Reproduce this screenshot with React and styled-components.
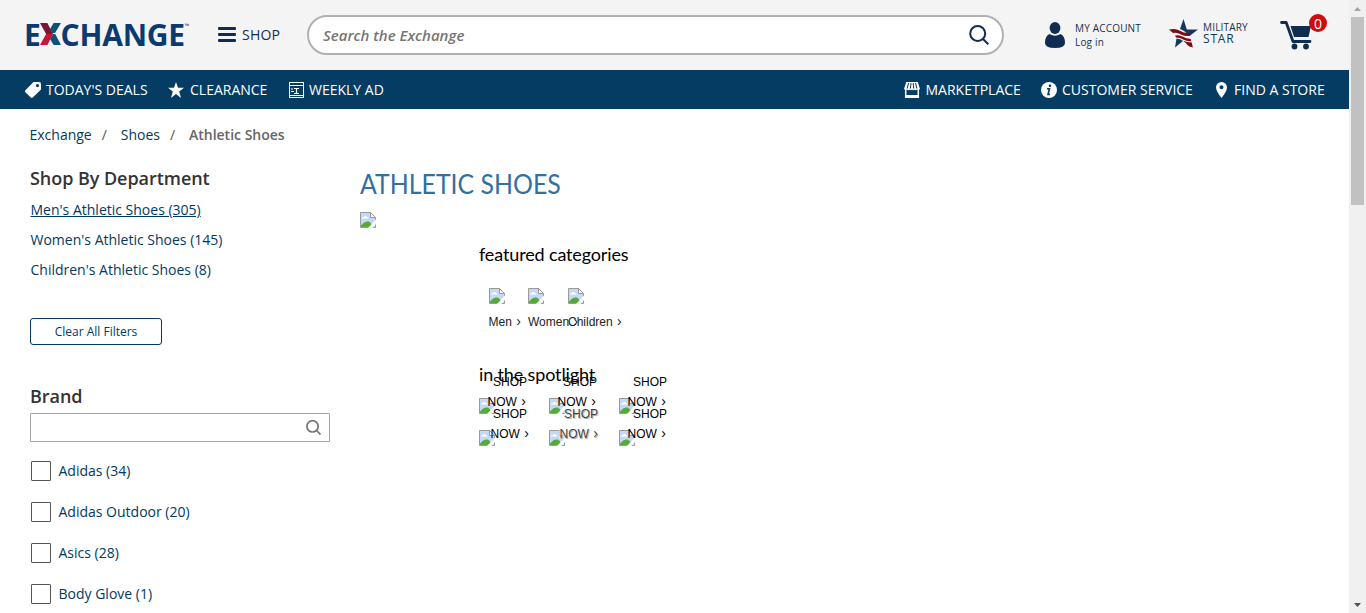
import React from "react";
import styled, { createGlobalStyle } from "styled-components";

const Global = createGlobalStyle`
  * { box-sizing: border-box; }
  html, body { margin: 0; padding: 0; overflow: hidden; }
  body { background: #fff; font-family: "Open Sans", "Liberation Sans", sans-serif; color: #003a63; }
  svg { display: block; flex: none; }
`;

const Screen = styled.div`
  display: flex;
  width: 1366px;
  height: 613px;
  overflow: hidden;
`;
const Page = styled.div`
  width: 1349px;
  height: 613px;
  overflow: hidden;
`;

/* Header */
const Header = styled.header`
  display: flex;
  height: 70px;
  padding-left: 24px;
  align-items: center;
  background: #f4f4f4;
`;
const Logo = styled.div`
  display: flex;
  align-items: center;
  width: 194px;
  height: 31px;
  margin-bottom: 2px;
  font: 700 30px/31px "Open Sans", sans-serif;
  color: #0b3a70;
`;
const LogoText = styled.span`
  letter-spacing: ${(p) => p.$ls || "0"};
`;
const Trademark = styled.span`
  font-size: 6px;
  line-height: 8px;
  font-weight: 400;
  align-self: flex-start;
  margin-top: 3px;
`;
const ShopMenu = styled.div`
  display: flex;
  align-items: center;
  gap: 6px;
  width: 89px;
  margin-bottom: 1px;
  font-size: 14px;
  letter-spacing: 0.2px;
  color: #0e2d52;
`;
const SearchBox = styled.div`
  display: flex;
  align-items: center;
  justify-content: space-between;
  width: 697px;
  height: 40px;
  padding: 0 13px 0 14px;
  border: 2px solid #b1b1b1;
  border-radius: 20px;
  background: #fff;
  font-size: 15px;
  font-style: italic;
  font-weight: 600;
  color: #757575;
`;
const Account = styled.div`
  display: flex;
  align-items: center;
  gap: 10px;
  width: 124px;
  margin-left: 41px;
`;
const Stack = styled.div`
  display: flex;
  flex-direction: column;
  white-space: nowrap;
`;
const Small = styled.span`
  font-size: 10px;
  line-height: ${(p) => p.$lh || "14px"};
  letter-spacing: 0.18px;
  color: #14304f;
`;
const StarWord = styled.span`
  font-size: 12px;
  line-height: 12px;
  letter-spacing: 0.8px;
  color: #0e3a5c;
`;
const Military = styled.div`
  display: flex;
  align-items: center;
  gap: 5px;
  width: 111px;
  height: 30px;
  margin-bottom: 3px;
`;
const Cart = styled.div`
  position: relative;
  width: 34px;
  height: 29px;
`;
const Badge = styled.span`
  position: absolute;
  left: 29px;
  top: -7px;
  width: 18px;
  height: 18px;
  border-radius: 50%;
  background: #d00b0f;
  color: #fff;
  font-size: 14px;
  line-height: 19px;
  text-align: center;
`;

/* Navigation bar */
const Nav = styled.nav`
  display: flex;
  align-items: center;
  height: 39px;
  padding-left: 25px;
  background: #043c64;
  color: #fff;
  font-size: 14px;
  white-space: nowrap;
`;
const NavItem = styled.div`
  display: flex;
  align-items: center;
  gap: ${(p) => p.$gap}px;
  width: ${(p) => p.$w}px;
`;

/* Body */
const Crumbs = styled.div`
  display: flex;
  align-items: center;
  height: 51px;
  padding-left: 29.5px;
  font-size: 14px;
  color: #003a63;
`;
const Slash = styled.span`
  width: ${(p) => p.$w}px;
  padding-left: 10px;
  color: #555;
`;
const Current = styled.span`
  font-weight: 600;
  color: #666;
`;
const Body = styled.main`
  display: flex;
`;
const Side = styled.aside`
  width: 330px;
  padding: 5px 0 0 30px;
`;
const SideTitle = styled.h2`
  margin: 0;
  font-size: 18px;
  line-height: 26px;
  font-weight: 600;
  color: #333;
  letter-spacing: -0.05px;
`;
const Departments = styled.div`
  display: flex;
  flex-direction: column;
  padding: 4px 0 0 0.5px;
`;
const Department = styled.a`
  font-size: 14px;
  line-height: 30px;
  color: #003a63;
  text-decoration: ${(p) => (p.$active ? "underline" : "none")};
`;
const ClearButton = styled.button`
  display: block;
  width: 132px;
  height: 27px;
  margin: 33px 0 38px;
  padding: 0;
  border: 1px solid #003a63;
  border-radius: 3px;
  background: #fff;
  font: 400 12px "Open Sans", sans-serif;
  color: #003a63;
`;
const BrandSearch = styled.div`
  display: flex;
  align-items: center;
  justify-content: flex-end;
  width: 300px;
  height: 29px;
  margin: 4px 0 8px;
  padding-right: 8px;
  border: 1px solid #a5a5a5;
  border-radius: 1px;
`;
const BrandRow = styled.label`
  display: flex;
  align-items: center;
  gap: 8px;
  height: 41px;
  padding-left: 0.5px;
  font-size: 14px;
`;
const Box = styled.span`
  width: 20px;
  height: 20px;
  border: 1px solid #555;
  border-radius: 1px;
`;

const Main = styled.section`
  width: 500px;
  padding: 4px 0 0 30px;
`;
const Title = styled.h1`
  margin: 0;
  font: 400 27px/40px Lato, sans-serif;
  color: #31709f;
  white-space: nowrap;
  transform: scaleX(0.921);
  transform-origin: left;
`;
const Banner = styled.div`
  height: 38px;
  padding-top: 8px;
`;
const Inner = styled.div`
  padding-left: 119px;
`;
const Subhead = styled.h3`
  margin: 0;
  height: 24px;
  font: 400 18px/24px Lato, sans-serif;
  letter-spacing: -0.14px;
  color: #000;
  white-space: nowrap;
`;
const Categories = styled.div`
  display: flex;
  height: 96px;
  padding: 22px 0 0 9.5px;
`;
const Category = styled.div`
  display: flex;
  flex-direction: column;
  gap: 10px;
  width: ${(p) => p.$w}px;
  font: 400 12px/16px "Liberation Sans", Arial, sans-serif;
  color: #222;
  white-space: pre;
`;
const Chevron = styled.span`
  margin-left: 1px;
  font: 400 14px/14px "Liberation Sans", Arial, sans-serif;
`;
const Spotlight = styled.div`
  display: grid;
  grid-template-columns: 70px 70px 70px;
  grid-auto-rows: 32px;
  padding-top: 12px;
`;
const Tile = styled.div`
  position: relative;
`;
const TileLink = styled.a`
  position: absolute;
  left: 0;
  top: -26px;
  display: flex;
  flex-direction: column;
  font: 400 12px/20px "Liberation Sans", Arial, sans-serif;
  color: ${(p) => (p.$shadow ? "#444" : "#000")};
  text-shadow: ${(p) => (p.$shadow ? "-1px 0 0 #fff, 1px 1px 1px #999" : "none")};
  white-space: pre;
`;
const TileLine = styled.span`
  padding-left: ${(p) => p.$x}px;
`;

/* Scrollbar */
const Scrollbar = styled.div`
  display: flex;
  flex-direction: column;
  align-items: center;
  width: 17px;
  height: 613px;
  background: #f0f0f0;
`;
const ArrowCell = styled.div`
  display: flex;
  align-items: center;
  justify-content: center;
  height: 17px;
`;
const Thumb = styled.div`
  width: 13px;
  height: 188px;
  margin-bottom: 391px;
  background: #c1c1c1;
`;

const Broken = () => (
  <svg width="16" height="16" viewBox="0 0 16 16">
    <path d="M.5.5h10l5 5v10H.5z" fill="#c5d8f8" stroke="#9a9a9a" />
    <path d="M10.5.5v5h5z" fill="#fff" stroke="#9a9a9a" />
    <path d="M2 6.5c0-1 1-1.5 1.7-1C4 3.5 6.5 3.5 7 5.2c1.2-.2 1.5.5 1.5 1.3z" fill="#fff" />
    <path d="M1 15v-1.5C3.5 11 5 9.500 7.5 9.500S11 11 13 15z" fill="#56aa38" />
    <path d="M7.500 16.500 16.500 7v4.500L12 16.500z" fill="#fff" />
  </svg>
);

const LogoX = () => (
  <svg width="21" height="22" viewBox="0 0 20 21" preserveAspectRatio="none">
    <path d="M0 0h7l5.500 10.500H5.800z" fill="#7b1533" />
    <path d="M5.800 10.500h6.700L7 21H0z" fill="#c41636" />
    <path d="M13 0h7l-5.700 9.500h-2.500L9.600 5.800z" fill="#0d5278" />
    <path d="M12.500 10.500h2L20 21h-7l-3.300-5.600z" fill="#0d5278" />
  </svg>
);

const Search = ({ size, color, sw }) => (
  <svg width={size} height={size} viewBox="0 0 20 20" fill="none" stroke={color} strokeWidth={sw}>
    <circle cx="8.700" cy="8.500" r="7.500" />
    <path d="M14 14l5.300 5.300" />
  </svg>
);

const brands = ["Adidas (34)", "Adidas Outdoor (20)", "Asics (28)", "Body Glove (1)"];
const categories = [
  ["Men", 39.5],
  ["Women", 40],
  ["Children", 60],
];
const tiles = [
  [14, 8.5],
  [14, 8.5],
  [14, 8.5],
  [14, 11.5],
  [15, 10.5, true],
  [14, 8.5],
];

export default function App() {
  return (
    <Screen>
      <Global />
      <Page>
        <Header>
          <Logo>
            <LogoText $ls="-1.2px">E</LogoText>
            <LogoX />
            <LogoText $ls="-0.25px">CHANGE</LogoText>
            <Trademark>™</Trademark>
          </Logo>
          <ShopMenu>
            <svg width="18" height="15" viewBox="0 0 18 15" fill="#0e2d52">
              <rect width="18" height="3" rx="1" />
              <rect y="6" width="18" height="3" rx="1" />
              <rect y="12" width="18" height="3" rx="1" />
            </svg>
            SHOP
          </ShopMenu>
          <SearchBox>
            Search the Exchange
            <Search size={20} color="#0e2d52" sw={2} />
          </SearchBox>
          <Account>
            <svg width="20" height="26" viewBox="0 0 20 26" fill="#102d51">
              <ellipse cx="10" cy="6" rx="5.4" ry="6" />
              <path d="M4.500 12Q10 15.500 15.500 12 20 14 20 21q0 5-10 5T0 21q0-7 4.500-9z" />
            </svg>
            <Stack>
              <Small>MY ACCOUNT</Small>
              <Small>Log in</Small>
            </Stack>
          </Account>
          <Military>
            <svg width="29" height="29" viewBox="0 0 29 29">
              <path d="M14.500 0l3.300 10.500H29L20.500 17q-4-5-9.500-7z" fill="#153862" />
              <path d="M7.500 19.500q4 0 6.500 2.500l-8 6.500z" fill="#153862" />
              <path d="M0 10.500q7-1.200 11 1.300t8.500 2.200l1.500 3q-5.500.5-9.500-1.800T4 14z" fill="#7f0a16" />
              <path d="M6 16.500q4.500-1 8 1.200t7.500 2l.8 2.600q-5 .2-8-1.800T7 18.500z" fill="#7f0a16" />
              <path d="M14 21.500q3.500 2 8.800 2l1 5q-4-.8-5.300-2.500T14 21.500z" fill="#7f0a16" />
            </svg>
            <Stack>
              <Small $lh="11px">MILITARY</Small>
              <StarWord>STAR</StarWord>
            </Stack>
          </Military>
          <Cart>
            <svg width="34" height="29" viewBox="0 0 34 29">
              <path d="M1.500 1.500h4.700L13 20.500h17" fill="none" stroke="#102d51" strokeWidth="2.800" strokeLinecap="round" strokeLinejoin="round" />
              <path d="M10.500 5H31l-2.500 11H14z" fill="#102d51" />
              <circle cx="14.500" cy="25.500" r="2.900" fill="#102d51" />
              <circle cx="26" cy="25.500" r="2.900" fill="#102d51" />
            </svg>
            <Badge>0</Badge>
          </Cart>
        </Header>
        <Nav>
          <NavItem $w={143} $gap={5}>
            <svg width="16" height="16" viewBox="0 0 16 16">
              <path d="M8.500 0H14q2 0 2 2v5.500L7.800 15.500q-1 .8-2 0L.4 10.200q-.8-1 0-2zM12.500 2a1.600 1.600 0 100 3.200 1.600 1.600 0 000-3.200z" fill="#fff" fillRule="evenodd" />
            </svg>
            TODAY'S DEALS
          </NavItem>
          <NavItem $w={121} $gap={6}>
            <svg width="16" height="16" viewBox="0 0 16 16">
              <path d="M8 0l2 5.700h6l-4.800 3.700L13 16l-5-4-5 4 1.800-6.600L0 5.700h6z" fill="#fff" />
            </svg>
            CLEARANCE
          </NavItem>
          <NavItem $w={615} $gap={5}>
            <svg width="15" height="16" viewBox="0 0 15 16" fill="none" stroke="#fff">
              <rect x=".5" y=".5" width="14" height="15" />
              <path d="M1 3.500h13M5 6.500h5M7.500 7v4M2 7h2M2 9.500h3M5 11.500h5M1 13.500h13" strokeWidth="1.200" />
            </svg>
            WEEKLY AD
          </NavItem>
          <NavItem $w={137} $gap={5.5}>
            <svg width="16" height="16" viewBox="0 0 16 16">
              <path d="M2.200 0h11.600L16 7q-1.300 2-3 .5-1.300 1.300-2.500 0-1.200 1.300-2.500 0-1.200 1.300-2.500 0-1.200 1.300-2.500 0Q1.300 9 0 7z" fill="#fff" />
              <path d="M4.500 1L3.200 6.500M7 1l-.6 5.500M9.200 1l.5 5.500M11.600 1l1.200 5.500" stroke="#043c64" />
              <path d="M1.700 8v7.200h12.600V8M1.700 13.800h12.600" fill="none" stroke="#fff" strokeWidth="1.500" />
            </svg>
            MARKETPLACE
          </NavItem>
          <NavItem $w={175} $gap={5}>
            <svg width="16" height="16" viewBox="0 0 16 16">
              <circle cx="8" cy="8" r="8" fill="#fff" />
              <circle cx="9" cy="3.800" r="1.300" fill="#043c64" />
              <path d="M6 6.800h2.500L7 12.500h2" fill="none" stroke="#043c64" strokeWidth="1.600" />
            </svg>
            CUSTOMER SERVICE
          </NavItem>
          <NavItem $w={120} $gap={7}>
            <svg width="11" height="16" viewBox="0 0 11 16">
              <path d="M5.500 0a5.500 5.500 0 015.500 5.500Q11 9 5.500 16 0 9 0 5.500A5.500 5.500 0 015.500 0zm0 3.300a2 2 0 100 4 2 2 0 000-4z" fill="#fff" fillRule="evenodd" />
            </svg>
            FIND A STORE
          </NavItem>
        </Nav>
        <Crumbs>
          Exchange<Slash $w={29}>/</Slash>Shoes<Slash $w={29}>/</Slash>
          <Current>Athletic Shoes</Current>
        </Crumbs>
        <Body>
          <Side>
            <SideTitle>Shop By Department</SideTitle>
            <Departments>
              <Department $active>Men's Athletic Shoes (305)</Department>
              <Department>Women's Athletic Shoes (145)</Department>
              <Department>Children's Athletic Shoes (8)</Department>
            </Departments>
            <ClearButton>Clear All Filters</ClearButton>
            <SideTitle>Brand</SideTitle>
            <BrandSearch>
              <Search size={15} color="#757575" sw={2.3} />
            </BrandSearch>
            {brands.map((b) => (
              <BrandRow key={b}>
                <Box />
                {b}
              </BrandRow>
            ))}
          </Side>
          <Main>
            <Title>ATHLETIC SHOES</Title>
            <Banner>
              <Broken />
            </Banner>
            <Inner>
              <Subhead>featured categories</Subhead>
              <Categories>
                {categories.map(([name, w]) => (
                  <Category key={name} $w={w}>
                    <Broken />
                    <span>
                      {name} <Chevron>›</Chevron>
                    </span>
                  </Category>
                ))}
              </Categories>
              <Subhead>in the spotlight</Subhead>
              <Spotlight>
                {tiles.map(([a, b, s], i) => (
                  <Tile key={i}>
                    <Broken />
                    <TileLink $shadow={s}>
                      <TileLine $x={a}>SHOP</TileLine>
                      <TileLine $x={b}>
                        NOW <Chevron>›</Chevron>
                      </TileLine>
                    </TileLink>
                  </Tile>
                ))}
              </Spotlight>
            </Inner>
          </Main>
        </Body>
      </Page>
      <Scrollbar>
        <ArrowCell>
          <svg width="7" height="4" viewBox="0 0 7 4">
            <path d="M0 4L3.500 0 7 4z" fill="#a3a3a3" />
          </svg>
        </ArrowCell>
        <Thumb />
        <ArrowCell>
          <svg width="7" height="4" viewBox="0 0 7 4">
            <path d="M0 0L3.500 4 7 0z" fill="#505050" />
          </svg>
        </ArrowCell>
      </Scrollbar>
    </Screen>
  );
}
